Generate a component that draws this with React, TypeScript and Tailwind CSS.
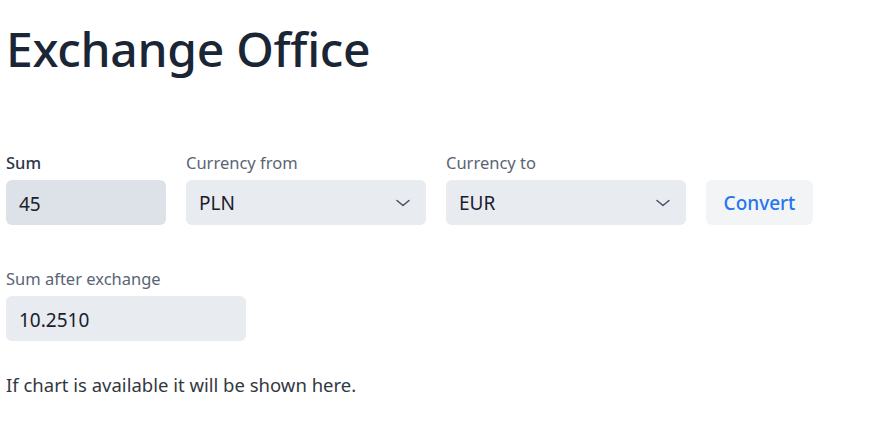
import { useState } from "react";

function Chevron() {
  return (
    <svg
      className="pointer-events-none absolute right-[15px] top-1/2 h-4 w-4 -translate-y-1/2 text-[#4a5568]"
      viewBox="0 0 16 16"
      fill="none"
      stroke="currentColor"
      strokeWidth="1.6"
      strokeLinecap="round"
      strokeLinejoin="round"
    >
      <path d="M2 5.5 8 10.5l6-5" />
    </svg>
  );
}

export default function App() {
  const [sum, setSum] = useState("45");
  const [from, setFrom] = useState("PLN");
  const [to, setTo] = useState("EUR");

  return (
    <div className="min-h-screen bg-white px-[6px] pt-[20px] font-['Noto_Sans',sans-serif] text-[#1a202c]">
      <h1 className="text-[48px] font-medium leading-[58px] tracking-[-0.3px] text-[#1a2535]">
        Exchange Office
      </h1>

      <div className="mt-[73px] flex items-end gap-5">
        <div className="flex w-[160px] flex-col">
          <label className="mb-[5px] text-[16.5px] font-medium leading-6 text-[#2d3748]">Sum</label>
          <input
            value={sum}
            onChange={(e) => setSum(e.target.value)}
            className="h-[45px] rounded-md bg-[#dde1e8] px-[13px] pt-[2px] text-[19px] text-[#1a202c] outline-none"
          />
        </div>

        <div className="flex w-[240px] flex-col">
          <label className="mb-[5px] text-[16.5px] leading-6 text-[#5a6475]">Currency from</label>
          <div className="relative">
            <select
              value={from}
              onChange={(e) => setFrom(e.target.value)}
              className="h-[45px] w-full appearance-none rounded-md bg-[#e8ebf0] px-[13px] pt-[2px] text-[19px] text-[#1a202c] outline-none"
            >
              <option>PLN</option>
              <option>EUR</option>
              <option>USD</option>
            </select>
            <Chevron />
          </div>
        </div>

        <div className="flex w-[240px] flex-col">
          <label className="mb-[5px] text-[16.5px] leading-6 text-[#5a6475]">Currency to</label>
          <div className="relative">
            <select
              value={to}
              onChange={(e) => setTo(e.target.value)}
              className="h-[45px] w-full appearance-none rounded-md bg-[#e8ebf0] px-[13px] pt-[2px] text-[19px] text-[#1a202c] outline-none"
            >
              <option>EUR</option>
              <option>PLN</option>
              <option>USD</option>
            </select>
            <Chevron />
          </div>
        </div>

        <button className="h-[45px] w-[107px] rounded-md bg-[#f3f4f6] pt-[2px] text-[19px] font-medium text-[#2675f0]">
          Convert
        </button>
      </div>

      <div className="mt-[42px] flex w-[240px] flex-col">
        <label className="mb-[5px] text-[16.5px] leading-6 text-[#5a6475]">Sum after exchange</label>
        <input
          readOnly
          value="10.2510"
          className="h-[45px] rounded-md bg-[#e8ebf0] px-[13px] pt-[2px] text-[19px] text-[#1a202c] outline-none"
        />
      </div>

      <p className="mt-[30px] text-[18.5px] leading-7 text-[#33383f]">
        If chart is available it will be shown here.
      </p>
    </div>
  );
}
